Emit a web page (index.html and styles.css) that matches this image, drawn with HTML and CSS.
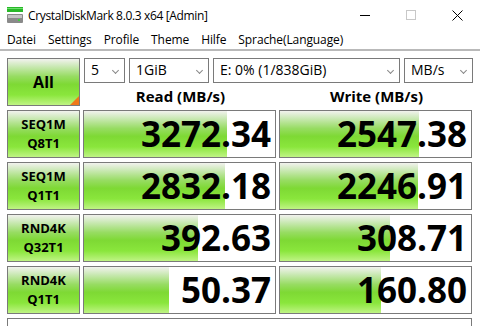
FILE: index.html
```html
<!DOCTYPE html>
<html lang="de">
<head>
    <meta charset="UTF-8">
    <title>CrystalDiskMark 8.0.3 x64 [Admin]</title>
    <link rel="stylesheet" href="styles.css">
</head>
<body>
    <div class="titlebar">
        <div class="app-icon">
            <svg width="17" height="17" viewBox="0 0 17 17">
                <rect x="0" y="0" width="16" height="5" fill="#28b828"/>
                <rect x="0" y="1" width="16" height="1" fill="#6ee06e"/>
                <rect x="0" y="7" width="16" height="9" rx="1" fill="#8a8a8a"/>
                <rect x="1" y="8" width="14" height="3" fill="#c4c4c4"/>
                <rect x="11" y="12" width="2" height="2" fill="#3cd03c"/>
            </svg>
        </div>
        <div class="title">CrystalDiskMark 8.0.3 x64 [Admin]</div>
        <div class="controls">
            <span class="ctl min"></span>
            <span class="ctl max"></span>
            <span class="ctl close">
                <svg width="11" height="11" viewBox="0 0 11 11">
                    <path d="M0.5 0.5 L10.5 10.5 M10.5 0.5 L0.5 10.5" stroke="#000" stroke-width="1"/>
                </svg>
            </span>
        </div>
    </div>
    <nav class="menubar">
        <a>Datei</a>
        <a>Settings</a>
        <a>Profile</a>
        <a>Theme</a>
        <a>Hilfe</a>
        <a>Sprache(Language)</a>
    </nav>
    <main class="panel">
        <div class="top">
            <button class="all">All<span class="corner"></span></button>
            <div class="top-right">
                <div class="selects">
                    <div class="select count">5<i></i></div>
                    <div class="select size">1GiB<i></i></div>
                    <div class="select drive">E: 0% (1/838GiB)<i></i></div>
                    <div class="select unit">MB/s<i></i></div>
                </div>
                <div class="heads">
                    <div>Read (MB/s)</div>
                    <div>Write (MB/s)</div>
                </div>
            </div>
        </div>

        <div class="row">
            <div class="label">SEQ1M<br>Q8T1</div>
            <div class="meter"><div class="bar" style="width: 75%"></div><span>3272.34</span></div>
            <div class="meter"><div class="bar" style="width: 72.8%"></div><span>2547.38</span></div>
        </div>
        <div class="row">
            <div class="label">SEQ1M<br>Q1T1</div>
            <div class="meter"><div class="bar" style="width: 73.8%"></div><span>2832.18</span></div>
            <div class="meter"><div class="bar" style="width: 72.3%"></div><span>2246.91</span></div>
        </div>
        <div class="row">
            <div class="label">RND4K<br>Q32T1</div>
            <div class="meter"><div class="bar" style="width: 59.7%"></div><span>392.63</span></div>
            <div class="meter"><div class="bar" style="width: 57.6%"></div><span>308.71</span></div>
        </div>
        <div class="row">
            <div class="label">RND4K<br>Q1T1</div>
            <div class="meter"><div class="bar" style="width: 44.5%"></div><span>50.37</span></div>
            <div class="meter"><div class="bar" style="width: 52.9%"></div><span>160.80</span></div>
        </div>

        <div class="comment"></div>
    </main>
</body>
</html>
```

FILE: styles.css
```css
body {
    margin: 0;
    background-color: #ffffff;
    color: #000000;
    font-family: "Open Sans", "Noto Sans", sans-serif;
    overflow: hidden;
}

.titlebar {
    display: flex;
    align-items: center;
    height: 30px;
}

.app-icon {
    width: 17px;
    height: 17px;
    margin: 0 4px 0 7px;
    padding-top: 1px;
}

.title {
    font-size: 12px;
    flex: 1;
    letter-spacing: -0.35px;
}

.controls {
    display: flex;
    height: 30px;
}

.ctl {
    width: 46px;
    height: 30px;
    display: flex;
    align-items: center;
    justify-content: center;
}

.ctl.min::before {
    content: "";
    width: 10px;
    height: 1px;
    background: #000000;
}

.ctl.max::before {
    content: "";
    width: 8px;
    height: 8px;
    border: 1px solid #c8c8c8;
}

.menubar {
    display: flex;
    height: 19px;
    align-items: center;
    padding-left: 1px;
    border-bottom: 2px solid #b9b9b9;
}

.menubar a {
    font-size: 12px;
    padding: 0 6px;
    letter-spacing: -0.1px;
}

.panel {
    padding: 7px 0 0 7px;
    display: flex;
    flex-direction: column;
    gap: 4px;
}

.top {
    display: flex;
    gap: 3px;
    height: 48px;
}

.all {
    position: relative;
    width: 73px;
    height: 48px;
    border: 1px solid #7a7a7a;
    font-family: "Open Sans", sans-serif;
    font-size: 16px;
    font-weight: bold;
    padding: 0;
    background: linear-gradient(to bottom, #f2f2ee 0%, #cfeabc 14%, #97dc62 38%, #7ed934 55%, #8ae63c 78%, #bff484 100%);
}

.corner {
    position: absolute;
    right: 0;
    bottom: 0;
    width: 0;
    height: 0;
    border-left: 9px solid transparent;
    border-bottom: 9px solid #f07818;
}

.top-right {
    display: flex;
    flex-direction: column;
    width: 389px;
    margin-left: 1px;
}

.selects {
    display: flex;
    gap: 4px;
    height: 25px;
}

.select {
    position: relative;
    box-sizing: border-box;
    height: 25px;
    border: 1px solid #7a7a7a;
    font-size: 14px;
    line-height: 22px;
    padding-left: 6px;
}

.select i {
    position: absolute;
    right: 6px;
    top: 9px;
    width: 4px;
    height: 4px;
    border-right: 1px solid #888888;
    border-bottom: 1px solid #888888;
    transform: rotate(45deg);
}

.select.count { width: 41px; }
.select.size { width: 80px; }
.select.drive { flex: 1; }
.select.unit { width: 69px; }

.heads {
    display: flex;
    gap: 3px;
    height: 23px;
    align-items: flex-end;
}

.heads div {
    width: 193px;
    text-align: center;
    font-size: 15px;
    font-weight: bold;
    line-height: 20px;
}

.row {
    display: grid;
    grid-template-columns: 73px 193px 193px;
    column-gap: 3px;
    height: 48px;
}

.label {
    box-sizing: border-box;
    border: 1px solid #7a7a7a;
    text-align: center;
    font-size: 13px;
    font-weight: bold;
    line-height: 19px;
    padding-top: 4px;
    background: linear-gradient(to bottom, #f2f2ee 0%, #cfeabc 14%, #97dc62 38%, #7ed934 55%, #8ae63c 78%, #bff484 100%);
}

.meter {
    position: relative;
    box-sizing: border-box;
    border: 1px solid #7a7a7a;
    background: #ffffff;
    display: flex;
    align-items: center;
    justify-content: flex-end;
    padding-right: 4px;
}

.meter .bar {
    position: absolute;
    left: 0;
    top: 0;
    bottom: 0;
    background: linear-gradient(to bottom, #f2f2ee 0%, #cfeabc 14%, #97dc62 38%, #7ed934 55%, #8ae63c 78%, #bff484 100%);
}

.meter span {
    position: relative;
    font-size: 35px;
    font-weight: bold;
    line-height: 40px;
    letter-spacing: 0;
}

.comment {
    height: 20px;
    width: 463px;
    border: 1px solid #7a7a7a;
}
```
